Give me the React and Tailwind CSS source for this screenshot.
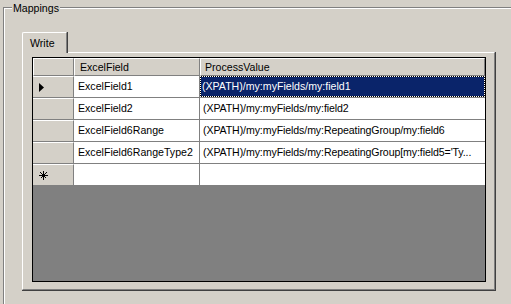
import React from "react";

const rows = [
  { field: "ExcelField1", value: "(XPATH)/my:myFields/my:field1", current: true },
  { field: "ExcelField2", value: "(XPATH)/my:myFields/my:field2" },
  { field: "ExcelField6Range", value: "(XPATH)/my:myFields/my:RepeatingGroup/my:field6" },
  {
    field: "ExcelField6RangeType2",
    value: "(XPATH)/my:myFields/my:RepeatingGroup[my:field5='Ty...",
  },
];

function Arrow() {
  return (
    <svg width="5" height="9" viewBox="0 0 5 9">
      <polygon points="0,0 5,4.5 0,9" fill="#000" />
    </svg>
  );
}

function Star() {
  return (
    <svg width="9" height="9" viewBox="0 0 9 9" shapeRendering="crispEdges">
      <path
        d="M0 4.5h9M4.5 0v9M1.5 1.5l6 6M7.5 1.5l-6 6"
        stroke="#000"
        strokeWidth="1"
        fill="none"
      />
    </svg>
  );
}

export default function App() {
  return (
    <div className="w-[511px] h-[304px] overflow-hidden bg-[#d4d0c8] pl-[3px] pt-[7px] text-[10.6px] text-black font-['Liberation_Sans',Arial,sans-serif]">
      {/* group box */}
      <div className="relative h-full border-l border-t border-[#808080]">
        <div className="h-full border-l border-t border-white pl-[17px] pt-[23px]">
          {/* tab control */}
          <div className="flex w-[474px] flex-col">
            <div className="relative z-10 -mb-px flex">
              <div className="h-[21px] w-[46px] border-r border-[#404040]">
                <div className="h-full rounded-tl-[2px] border-l border-t border-r border-l-white border-t-white border-r-[#808080] bg-[#d4d0c8] pl-[7px] pt-[4px] leading-[13px]">
                  Write
                </div>
              </div>
            </div>

            {/* tab page */}
            <div className="h-[239px] border-r border-b border-[#404040]">
              <div className="h-full border border-l-white border-t-white border-r-[#808080] border-b-[#808080] pl-[9px] pt-[4px] pr-[8px] pb-[7px]">
                {/* grid */}
                <div className="flex h-full flex-col border border-black bg-[#808080]">
                  <div className="flex h-[18px] bg-[#d4d0c8]">
                    <div className="w-[41px] border border-l-white border-t-white border-r-[#808080] border-b-[#808080]" />
                    <div className="flex w-[126px] items-center border border-l-white border-t-white border-r-[#808080] border-b-[#808080] pl-[5px] pt-[1px]">
                      ExcelField
                    </div>
                    <div className="flex flex-1 items-center border border-l-white border-t-white border-r-[#808080] border-b-[#808080] pl-[4px] pt-[1px]">
                      ProcessValue
                    </div>
                  </div>

                  {rows.map((r) => (
                    <div key={r.field} className="flex h-[22px] bg-white">
                      <div className="flex w-[41px] items-center border-t border-r border-b border-t-white border-r-[#808080] border-b-[#808080] bg-[#d4d0c8] pl-[6px]">
                        {r.current && <Arrow />}
                      </div>
                      <div className="flex w-[126px] items-center border-r border-b border-[#808080] pl-[4px] whitespace-nowrap">
                        {r.field}
                      </div>
                      <div className="flex min-w-0 flex-1 border-b border-[#808080]">
                        {r.current ? (
                          <div className="flex-1 border border-dotted border-white bg-black">
                            <div className="flex h-full items-center bg-[#0a246a] pl-[1px] text-white">
                              {r.value}
                            </div>
                          </div>
                        ) : (
                          <div className="flex flex-1 items-center pl-[3px] whitespace-nowrap tracking-[-0.1px]">
                            {r.value}
                          </div>
                        )}
                      </div>
                    </div>
                  ))}

                  <div className="flex h-[21px] bg-white">
                    <div className="flex w-[41px] items-center border-t border-r border-t-white border-r-[#808080] bg-[#d4d0c8] pl-[6px]">
                      <Star />
                    </div>
                    <div className="w-[126px] border-r border-[#808080]" />
                    <div className="flex-1" />
                  </div>
                </div>
              </div>
            </div>
          </div>
        </div>
        <div className="absolute left-[8px] top-[-6px] bg-[#d4d0c8] px-[1px] leading-[13px]">
          Mappings
        </div>
      </div>
    </div>
  );
}
